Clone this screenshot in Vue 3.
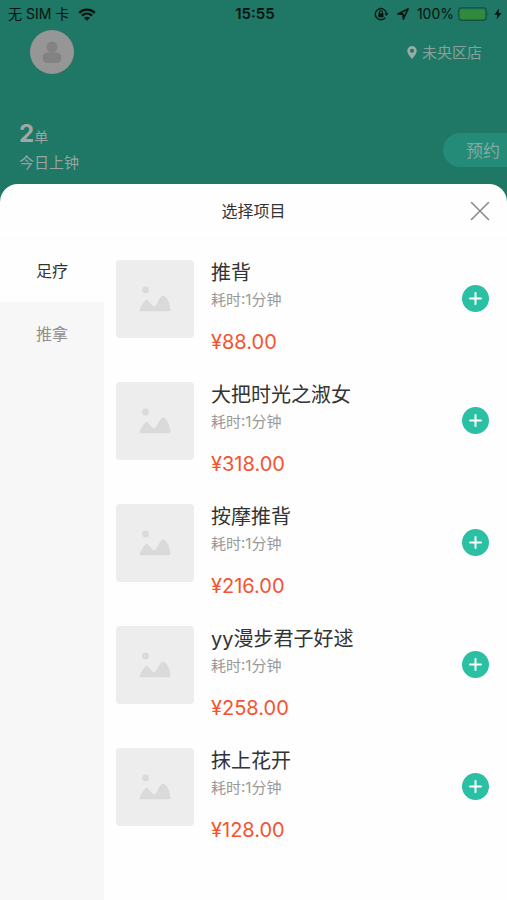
<script setup>
import { ref } from 'vue'

const tabs = ['足疗', '推拿']
const active = ref(0)
const items = [
  { name: '推背', price: '88.00' },
  { name: '大把时光之淑女', price: '318.00' },
  { name: '按摩推背', price: '216.00' },
  { name: 'yy漫步君子好逑', price: '258.00' },
  { name: '抹上花开', price: '128.00' },
]
</script>

<template>
  <div class="page">
    <div class="status">
      <div class="status-left">
        <span>无 SIM 卡</span>
        <svg width="18" height="13" viewBox="0 0 18 13" fill="none" stroke="#07140f" stroke-width="2.3">
          <path d="M1.2 4.8C5.6.6 12.4.6 16.800 4.8" />
          <path d="M4 7.700C6.900 5 11.100 5 14 7.700" />
          <path d="M9 12.800L6 9.800C7.700 8.300 10.300 8.300 12 9.800Z" fill="#07140f" stroke="none" />
        </svg>
      </div>
      <strong class="clock">15:55</strong>
      <div class="status-right">
        <svg width="15" height="14" viewBox="0 0 15 14" fill="none" stroke="#07140f">
          <path d="M11.300 10.600A5.600 5.600 0 1 1 12.400 6.200" stroke-width="1.300" />
          <path d="M10.300 6.200h4.200l-2.100 2.800z" fill="#07140f" stroke="none" />
          <rect x="4.300" y="6.200" width="5.200" height="4" rx=".5" fill="#07140f" stroke="none" />
          <path d="M5.400 6.500V5.300a1.500 1.500 0 0 1 3 0v1.200" stroke-width="1.100" />
        </svg>
        <svg class="arrow" width="12" height="12" viewBox="0 0 12 12" fill="none" stroke="#07140f" stroke-width="1.700" stroke-linejoin="round">
          <path d="M1 5.900L11 1L6.400 11L6 6.200Z" />
        </svg>
        <span>100%</span>
        <svg class="battery" width="32" height="14" viewBox="0 0 32 14" fill="none">
          <rect x=".6" y=".9" width="27.600" height="12.400" rx="3" stroke="#145246" stroke-width="1.200" />
          <rect x="2" y="2.300" width="24.800" height="9.600" rx="1.600" fill="#2f8a3b" />
          <path d="M29.500 5.200q2 1.900 0 3.800z" fill="#145246" />
        </svg>
        <svg width="8" height="12" viewBox="0 0 8 12"><path d="M5 .5L.5 6.700h2.900L2.600 11.500L7.500 5H4.600Z" fill="#07140f" /></svg>
      </div>
    </div>

    <header class="profile">
      <svg class="avatar" width="44" height="44" viewBox="0 0 44 44">
        <circle cx="22" cy="22" r="22" fill="#969696" />
        <circle cx="22" cy="17" r="5.500" fill="#838383" />
        <rect x="12.500" y="22.500" width="19" height="10.500" rx="5.200" fill="#838383" />
      </svg>
      <div class="shop">
        <svg width="10" height="13" viewBox="0 0 10 13"><path fill-rule="evenodd" d="M5 0a4.700 4.700 0 0 1 4.700 4.700C9.700 7.800 6.600 11 5 13C3.400 11 .3 7.800.3 4.700A4.700 4.700 0 0 1 5 0ZM5 2.800a2 2 0 1 0 0 4a2 2 0 0 0 0-4Z" fill="#9aaca7" /></svg>
        <span>未央区店</span>
      </div>
    </header>

    <section class="summary">
      <div>
        <div class="count"><strong>2</strong>单</div>
        <div class="today">今日上钟</div>
      </div>
      <button class="book" type="button">预约</button>
    </section>

    <main class="sheet">
      <div class="sheet-head">
        <h1>选择项目</h1>
        <button class="close" type="button" aria-label="关闭">
          <svg width="20" height="20" viewBox="0 0 20 20"><path d="M1.500 1.500L18.500 18.500M18.500 1.500L1.500 18.500" stroke="#8b8b8b" stroke-width="1.600" stroke-linecap="round" /></svg>
        </button>
      </div>
      <div class="content">
        <nav class="tabs">
          <button
            v-for="(tab, i) in tabs"
            :key="tab"
            type="button"
            class="tab"
            :class="{ active: active === i }"
            @click="active = i"
          >{{ tab }}</button>
        </nav>
        <ul class="list">
          <li v-for="item in items" :key="item.name" class="item">
            <div class="thumb">
              <svg width="32" height="26" viewBox="0 0 32 26" fill="#dadada">
                <circle cx="6.500" cy="4" r="3.400" />
                <path d="M.5 24C2 20 4.500 16.500 6.300 14.400Q7.300 13.300 8.500 14.300C10.800 16.200 12.500 19.200 14.600 20.600C17.500 20 19.500 13.500 22.200 10.400Q23.800 8.800 25.600 10.100C29.200 12.700 30.700 18.500 31.500 23.500Q31.500 25.200 30 25.200H1.800Q.2 25.200.5 24Z" />
              </svg>
            </div>
            <div class="info">
              <h2>{{ item.name }}</h2>
              <p class="time">耗时:1分钟</p>
              <p class="price">¥{{ item.price }}</p>
            </div>
            <button class="add" type="button" :aria-label="'添加' + item.name">
              <svg width="13" height="13" viewBox="0 0 13 13"><path d="M6.500 1v11M1 6.500h11" stroke="#fff" stroke-width="2" stroke-linecap="round" /></svg>
            </button>
          </li>
        </ul>
      </div>
    </main>
  </div>
</template>

<style>
body {
  margin: 0;
}
</style>

<style scoped>
.page {
  display: flex;
  flex-direction: column;
  min-height: 100vh;
  background: #1f7765;
  color: #333;
  font-family: Inter, "Noto Sans CJK SC", sans-serif;
}
button {
  padding: 0;
  border: 0;
  background: none;
  font-family: inherit;
  cursor: pointer;
}
h1, h2, p, ul {
  margin: 0;
  padding: 0;
  font-weight: 400;
}
svg {
  display: block;
  flex: none;
}
.status {
  display: grid;
  grid-template-columns: 1fr auto 1fr;
  align-items: center;
  height: 28px;
  padding: 0 5px 0 8px;
  color: #07140f;
  font-size: 14px;
  line-height: 20px;
}
.status-left,
.status-right {
  display: flex;
  align-items: center;
  gap: 8px;
}
.status-left {
  gap: 9px;
}
.status-right {
  justify-content: flex-end;
}
.clock {
  font-size: 15px;
  font-weight: 600;
}
.status-right .battery {
  margin: 0 -4px;
}
.profile {
  display: flex;
  align-items: center;
  justify-content: space-between;
  padding: 2px 25px 0 30px;
}
.shop {
  display: flex;
  align-items: center;
  gap: 5px;
  padding-top: 1px;
  color: #88a29b;
  font-size: 15px;
  line-height: 20px;
}
.summary {
  display: flex;
  align-items: center;
  justify-content: space-between;
  padding: 46px 0 9px 19px;
  color: #96a5a1;
}
.count {
  font-size: 14px;
  line-height: 28px;
}
.count strong {
  font-size: 24px;
  font-weight: 700;
  color: #a3a8a6;
}
.today {
  font-size: 15px;
  line-height: 24px;
}
.book {
  width: 64px;
  height: 34px;
  margin-top: 4px;
  padding-left: 16px;
  border-radius: 17px 0 0 17px;
  background: #238b77;
  color: #86a8a0;
  font-size: 17px;
}
.sheet {
  display: flex;
  flex: 1;
  flex-direction: column;
  overflow: hidden;
  border-radius: 18px 18px 0 0;
  background: #fefefe;
}
.sheet-head {
  display: grid;
  grid-template-columns: 1fr auto 1fr;
  align-items: center;
  height: 54px;
  padding: 0 17px;
  border-bottom: 1px solid #fbfbfb;
}
.sheet-head h1 {
  grid-column: 2;
  font-size: 16px;
  line-height: 24px;
}
.close {
  justify-self: end;
}
.content {
  display: flex;
  flex: 1;
}
.tabs {
  width: 104px;
  flex: none;
  background: #f7f7f7;
}
.tab {
  display: block;
  width: 100%;
  height: 63px;
  padding-bottom: 2px;
  color: #8f8f8f;
  font-size: 16px;
}
.tab.active {
  background: #fefefe;
  color: #333;
}
.list {
  flex: 1;
  padding: 21px 18px 0 12px;
  list-style: none;
}
.item {
  display: flex;
  align-items: flex-start;
  gap: 17px;
  height: 122px;
}
.thumb {
  display: grid;
  place-items: center;
  width: 78px;
  height: 78px;
  border-radius: 4px;
  background: #ededed;
}
.info {
  flex: 1;
}
.info h2 {
  font-size: 20px;
  line-height: 26px;
}
.time {
  color: #999;
  font-size: 15px;
  line-height: 28px;
}
.price {
  padding-top: 14px;
  color: #f5532f;
  font-size: 20px;
  line-height: 28px;
}
.add {
  display: grid;
  place-items: center;
  width: 27px;
  height: 27px;
  margin-top: 25px;
  border-radius: 50%;
  background: #2bbfa3;
}
</style>
